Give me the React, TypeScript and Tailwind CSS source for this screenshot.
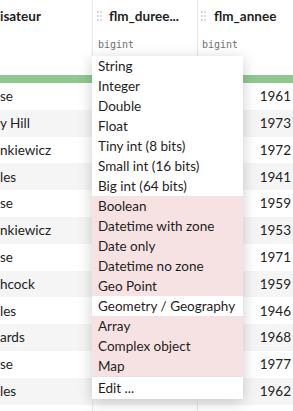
import React from "react";

const left = ["se", "y Hill", "nkiewicz", "les", "se", "nkiewicz", "se", "hcock", "les", "ards", "se", "les"];
const years = ["1961", "1973", "1972", "1941", "1959", "1953", "1971", "1959", "1946", "1968", "1977", "1962"];

const items: { label: string; pink: boolean }[] = [
  { label: "String", pink: false },
  { label: "Integer", pink: false },
  { label: "Double", pink: false },
  { label: "Float", pink: false },
  { label: "Tiny int (8 bits)", pink: false },
  { label: "Small int (16 bits)", pink: false },
  { label: "Big int (64 bits)", pink: false },
  { label: "Boolean", pink: true },
  { label: "Datetime with zone", pink: true },
  { label: "Date only", pink: true },
  { label: "Datetime no zone", pink: true },
  { label: "Geo Point", pink: true },
  { label: "Geometry / Geography", pink: false },
  { label: "Array", pink: true },
  { label: "Complex object", pink: true },
  { label: "Map", pink: true },
];

function Grip() {
  return (
    <svg width="5" height="10" viewBox="0 0 5 10" className="shrink-0">
      {[0, 3].map((x) =>
        [0, 4, 8].map((y) => <rect key={`${x}-${y}`} x={x} y={y} width="2" height="2" fill="#dadada" />)
      )}
    </svg>
  );
}

export default function App() {
  return (
    <div className="relative w-[293px] h-[411px] overflow-hidden bg-white font-['Lato',sans-serif] text-[#222]">
      {/* header */}
      <div className="flex h-[75px]">
        <div className="w-[93px] border-r border-[#e6e6e6] flex flex-col">
          <div className="h-[32px] flex items-center text-[13.5px] font-bold text-[#1e1e1e]">isateur</div>
        </div>
        <div className="w-[105px] border-r border-[#e6e6e6] flex flex-col pl-[4px]">
          <div className="h-[32px] flex items-center gap-[7px]">
            <Grip />
            <span className="text-[13.5px] font-bold text-[#1e1e1e]">flm_duree...</span>
          </div>
          <div className="mt-[2px] h-[20px] flex items-center pl-[1px] font-['DejaVu_Sans_Mono',monospace] text-[10px] text-[#707070]">bigint</div>
        </div>
        <div className="flex-1 flex flex-col pl-[3px]">
          <div className="h-[32px] flex items-center gap-[8px]">
            <Grip />
            <span className="text-[13.5px] font-bold text-[#1e1e1e]">flm_annee</span>
          </div>
          <div className="mt-[2px] h-[20px] flex items-center pl-[1px] font-['DejaVu_Sans_Mono',monospace] text-[10px] text-[#707070]">bigint</div>
        </div>
      </div>
      <div className="h-[8px] bg-[#90c890]" />
      {/* rows */}
      {left.map((l, i) => (
        <div key={i} className={`flex h-[26.8px] text-[13.5px] ${i % 2 === 1 ? "bg-[#f5f5f5]" : "bg-white"}`}>
          <div className="w-[93px] border-r border-[#e6e6e6] flex items-center whitespace-nowrap">{l}</div>
          <div className="w-[105px] border-r border-[#e6e6e6]" />
          <div className="flex-1 flex items-center justify-end pr-[2px]">{years[i]}</div>
        </div>
      ))}
      <div className="flex h-[20px]">
        <div className="w-[93px] border-r border-[#e6e6e6]" />
        <div className="w-[105px] border-r border-[#e6e6e6]" />
      </div>
      {/* dropdown */}
      <div className="absolute left-[92px] top-[56px] w-[151px] bg-white shadow-[0_3px_14px_rgba(0,0,0,0.2)] text-[13.5px] text-[#1e1e1e]">
        {items.map((it) => (
          <div key={it.label} className={`h-[20px] flex items-center px-[6px] whitespace-nowrap ${it.pink ? "bg-[#f6e2e2]" : ""}`}>
            {it.label}
          </div>
        ))}
        <div className="border-t border-[#e2e2e2] h-[23px] flex items-center px-[6px]">Edit ...</div>
      </div>
    </div>
  );
}
